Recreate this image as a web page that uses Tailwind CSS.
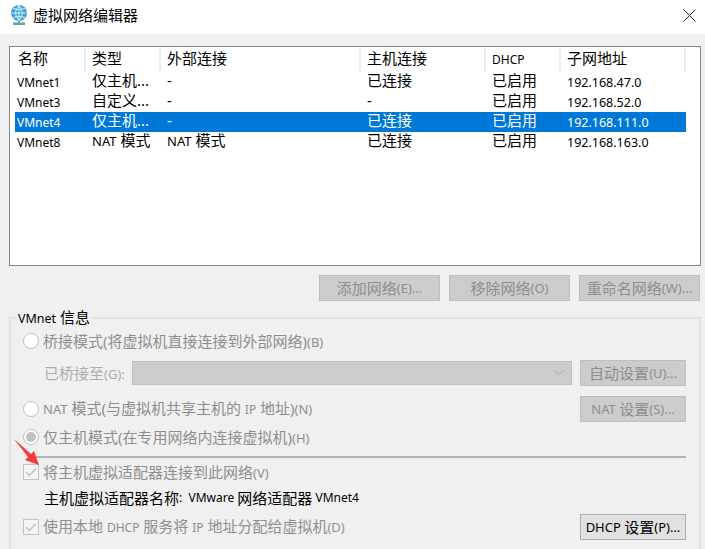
<!DOCTYPE html>
<html lang="zh">
<head>
  <meta charset="UTF-8">
  <title>虚拟网络编辑器</title>
  <script src="https://cdn.jsdelivr.net/npm/@tailwindcss/browser@4"></script>
</head>
<body class="relative w-[705px] h-[549px] overflow-hidden bg-[#f0f0f0] font-['Noto_Sans','Noto_Sans_CJK_SC',sans-serif] text-[15px] leading-[20px] text-black">
  <!-- title bar -->
  <header class="h-[34px] bg-white flex items-center pl-[10px] pr-[9px] pb-[4px]">
    <svg class="w-[18px] h-[20px]" viewBox="0 0 18 20">
      <circle cx="9" cy="8" r="8" fill="#3b9fd9"/>
      <path d="M1.500 8h15M9 .500v15M3 3.500q6 2.500 12 0M3 12.500q6-2.500 12 0M9 .500q-7 7.500 0 15M9 .500q7 7.500 0 15" fill="none" stroke="#d8eef8" stroke-width="1"/>
      <path d="M8 16h2v1.500h5V20H3v-2.500h5z" fill="#5fa8a0"/>
    </svg>
    <h1 class="ml-[5px]">虚拟网络编辑器</h1>
    <svg class="ml-auto w-[13px] h-[13px]" viewBox="0 0 13 13"><path d="M.5.500l12 12M12.500.500l-12 12" stroke="#222" fill="none"/></svg>
  </header>

  <main class="pl-[9px] pr-[4px] pt-[12px]">
    <!-- network list -->
    <section class="h-[220px] border border-[#828790] bg-white pl-[5px]">
      <div class="grid grid-cols-[71px_75px_200px_125px_75px_125px] h-[25px] items-center">
        <div class="h-[24px] pl-[3px] border-r-2 border-[#ececec]">名称</div>
        <div class="h-[24px] pl-[6px] border-r-2 border-[#ececec]">类型</div>
        <div class="h-[24px] pl-[6px] border-r-2 border-[#ececec]">外部连接</div>
        <div class="h-[24px] pl-[6px] border-r-2 border-[#ececec]">主机连接</div>
        <div class="h-[24px] pl-[6px] border-r-2 border-[#ececec] text-[12px] leading-[24px]">DHCP</div>
        <div class="h-[24px] pl-[6px] border-r-2 border-[#ececec]">子网地址</div>
      </div>
      <div class="w-[671px] grid grid-cols-[71px_75px_200px_125px_75px_125px] grid-rows-[20px] h-[20px] items-start">
        <div class="pl-[2px] pt-px text-[12px]">VMnet1</div><div class="pl-[6px] leading-[16px]">仅主机...</div><div class="pl-[6px] leading-[16px]">-</div><div class="pl-[6px] leading-[16px]">已连接</div><div class="pl-[6px] leading-[16px]">已启用</div><div class="pl-[6px] pt-px text-[12.500px]">192.168.47.0</div>
      </div>
      <div class="w-[671px] grid grid-cols-[71px_75px_200px_125px_75px_125px] grid-rows-[20px] h-[20px] items-start">
        <div class="pl-[2px] pt-px text-[12px]">VMnet3</div><div class="pl-[6px] leading-[16px]">自定义...</div><div class="pl-[6px] leading-[16px]">-</div><div class="pl-[6px] leading-[16px]">-</div><div class="pl-[6px] leading-[16px]">已启用</div><div class="pl-[6px] pt-px text-[12.500px]">192.168.52.0</div>
      </div>
      <div class="w-[671px] grid grid-cols-[71px_75px_200px_125px_75px_125px] grid-rows-[20px] h-[20px] items-start bg-[#0078d7] text-white">
        <div class="pl-[2px] pt-px text-[12px]">VMnet4</div><div class="pl-[6px] leading-[16px]">仅主机...</div><div class="pl-[6px] leading-[16px]">-</div><div class="pl-[6px] leading-[16px]">已连接</div><div class="pl-[6px] leading-[16px]">已启用</div><div class="pl-[6px] pt-px text-[12.500px]">192.168.111.0</div>
      </div>
      <div class="w-[671px] grid grid-cols-[71px_75px_200px_125px_75px_125px] grid-rows-[20px] h-[20px] items-start">
        <div class="pl-[2px] pt-px text-[12px]">VMnet8</div><div class="pl-[6px] leading-[16px] whitespace-nowrap"><span class="text-[13px]">NAT</span> 模式</div><div class="pl-[6px] leading-[16px]"><span class="text-[13px]">NAT</span> 模式</div><div class="pl-[6px] leading-[16px]">已连接</div><div class="pl-[6px] leading-[16px]">已启用</div><div class="pl-[6px] pt-px text-[12.500px]">192.168.163.0</div>
      </div>
    </section>

    <!-- list buttons -->
    <div class="mt-[9px] flex justify-end gap-[9px] pr-px text-[#8e8e8e]">
      <div class="w-[121px] h-[26px] flex items-center justify-center bg-[#cccccc] border border-[#bfbfbf]">添加网络<span class="text-[13px]">(E)...</span></div>
      <div class="w-[121px] h-[26px] flex items-center justify-center bg-[#cccccc] border border-[#bfbfbf]">移除网络<span class="text-[13px]">(O)</span></div>
      <div class="w-[121px] h-[26px] flex items-center justify-center bg-[#cccccc] border border-[#bfbfbf]">重命名网络<span class="text-[13px]">(W)...</span></div>
    </div>

    <!-- vmnet info -->
    <fieldset class="mt-[9px] h-[240px] border-2 border-b-0 border-[#e3e3e3] pl-[12px] pr-[13px] text-[#8e8e8e]">
      <legend class="-ml-[6px] px-[1px] h-[16px] leading-[14px] text-black"><span class="text-[12.500px]">VMnet</span> 信息</legend>
      <div class="h-[22px] flex items-center gap-[4px] mt-[4px]">
        <span class="w-[16px] h-[16px] rounded-full border border-[#c2c2c2] bg-white"></span>
        <span>桥接模式(将虚拟机直接连接到外部网络)<span class="text-[13px]">(B)</span></span>
      </div>
      <div class="mt-[8px] flex items-center h-[26px]">
        <span class="ml-[21px] w-[88px] text-[#adadad]">已桥接至<span class="text-[13px]">(G):</span></span>
        <div class="w-[440px] h-[24px] bg-[#cccccc] border border-[#bfbfbf] flex items-center justify-end pr-[7px]">
          <svg class="w-[10px] h-[6px]" viewBox="0 0 10 6"><path d="M.5.500L5 5 9.500.500" fill="none" stroke="#adadad"/></svg>
        </div>
        <div class="ml-[8px] w-[106px] h-[26px] flex items-center justify-center bg-[#cccccc] border border-[#bfbfbf]">自动设置<span class="text-[13px]">(U)...</span></div>
      </div>
      <div class="mt-[10px] flex items-center h-[26px]">
        <span class="w-[16px] h-[16px] rounded-full border border-[#c2c2c2] bg-white"></span>
        <span class="ml-[4px]"><span class="text-[13px]">NAT</span> 模式(与虚拟机共享主机的 <span class="text-[12px]">IP</span> 地址)<span class="text-[13px]">(N)</span></span>
        <div class="ml-auto w-[106px] h-[26px] flex items-center justify-center bg-[#cccccc] border border-[#bfbfbf] whitespace-pre"><span class="text-[13px]">NAT </span>设置<span class="text-[13px]">(S)...</span></div>
      </div>
      <div class="mt-[4px] h-[22px] flex items-center gap-[4px]">
        <span class="w-[16px] h-[16px] rounded-full border border-[#c2c2c2] bg-white flex items-center justify-center"><span class="w-[10px] h-[10px] rounded-full bg-[#c2c2c2]"></span></span>
        <span>仅主机模式(在专用网络内连接虚拟机)<span class="text-[13px]">(H)</span></span>
      </div>
      <div class="mt-[8px] ml-[8px] h-[2px] bg-[#b4b4b4]"></div>
      <div class="mt-[3px] h-[22px] flex items-center gap-[4px]">
        <span class="w-[16px] h-[16px] border border-[#c2c2c2] bg-[#f4f4f4] flex items-center justify-center">
          <svg class="w-[12px] h-[10px]" viewBox="0 0 12 10"><path d="M1 5l3.500 3.500L11 1.500" fill="none" stroke="#c2c2c2" stroke-width="1.500"/></svg>
        </span>
        <span>将主机虚拟适配器连接到此网络<span class="text-[13px]">(V)</span></span>
      </div>
      <div class="mt-[5px] h-[20px] pl-[21px] text-black flex items-center whitespace-pre">主机虚拟适配器名称<span class="text-[12px]">:  VMware </span>网络适配器<span class="text-[12px]"> VMnet4</span></div>
      <div class="mt-[6px] flex items-center h-[26px]">
        <span class="w-[16px] h-[16px] border border-[#c2c2c2] bg-[#f4f4f4] flex items-center justify-center">
          <svg class="w-[12px] h-[10px]" viewBox="0 0 12 10"><path d="M1 5l3.500 3.500L11 1.500" fill="none" stroke="#c2c2c2" stroke-width="1.500"/></svg>
        </span>
        <span class="ml-[4px]">使用本地 <span class="text-[12px]">DHCP</span> 服务将 <span class="text-[12px]">IP</span> 地址分配给虚拟机<span class="text-[13px]">(D)</span></span>
        <div class="ml-auto w-[106px] h-[26px] flex items-center justify-center bg-[#e1e1e1] border border-[#adadad] text-black whitespace-pre"><span class="text-[13px]">DHCP </span>设置<span class="text-[13px]">(P)...</span></div>
      </div>
    </fieldset>
  </main>

  <!-- red annotation arrow -->
  <svg class="absolute left-[12px] top-[437px] w-[30px] h-[30px]" viewBox="0 0 30 30">
    <path d="M2 2L19 17L22 14L27 28L13 23L16 20z" fill="#f43c3c"/>
  </svg>
</body>
</html>
